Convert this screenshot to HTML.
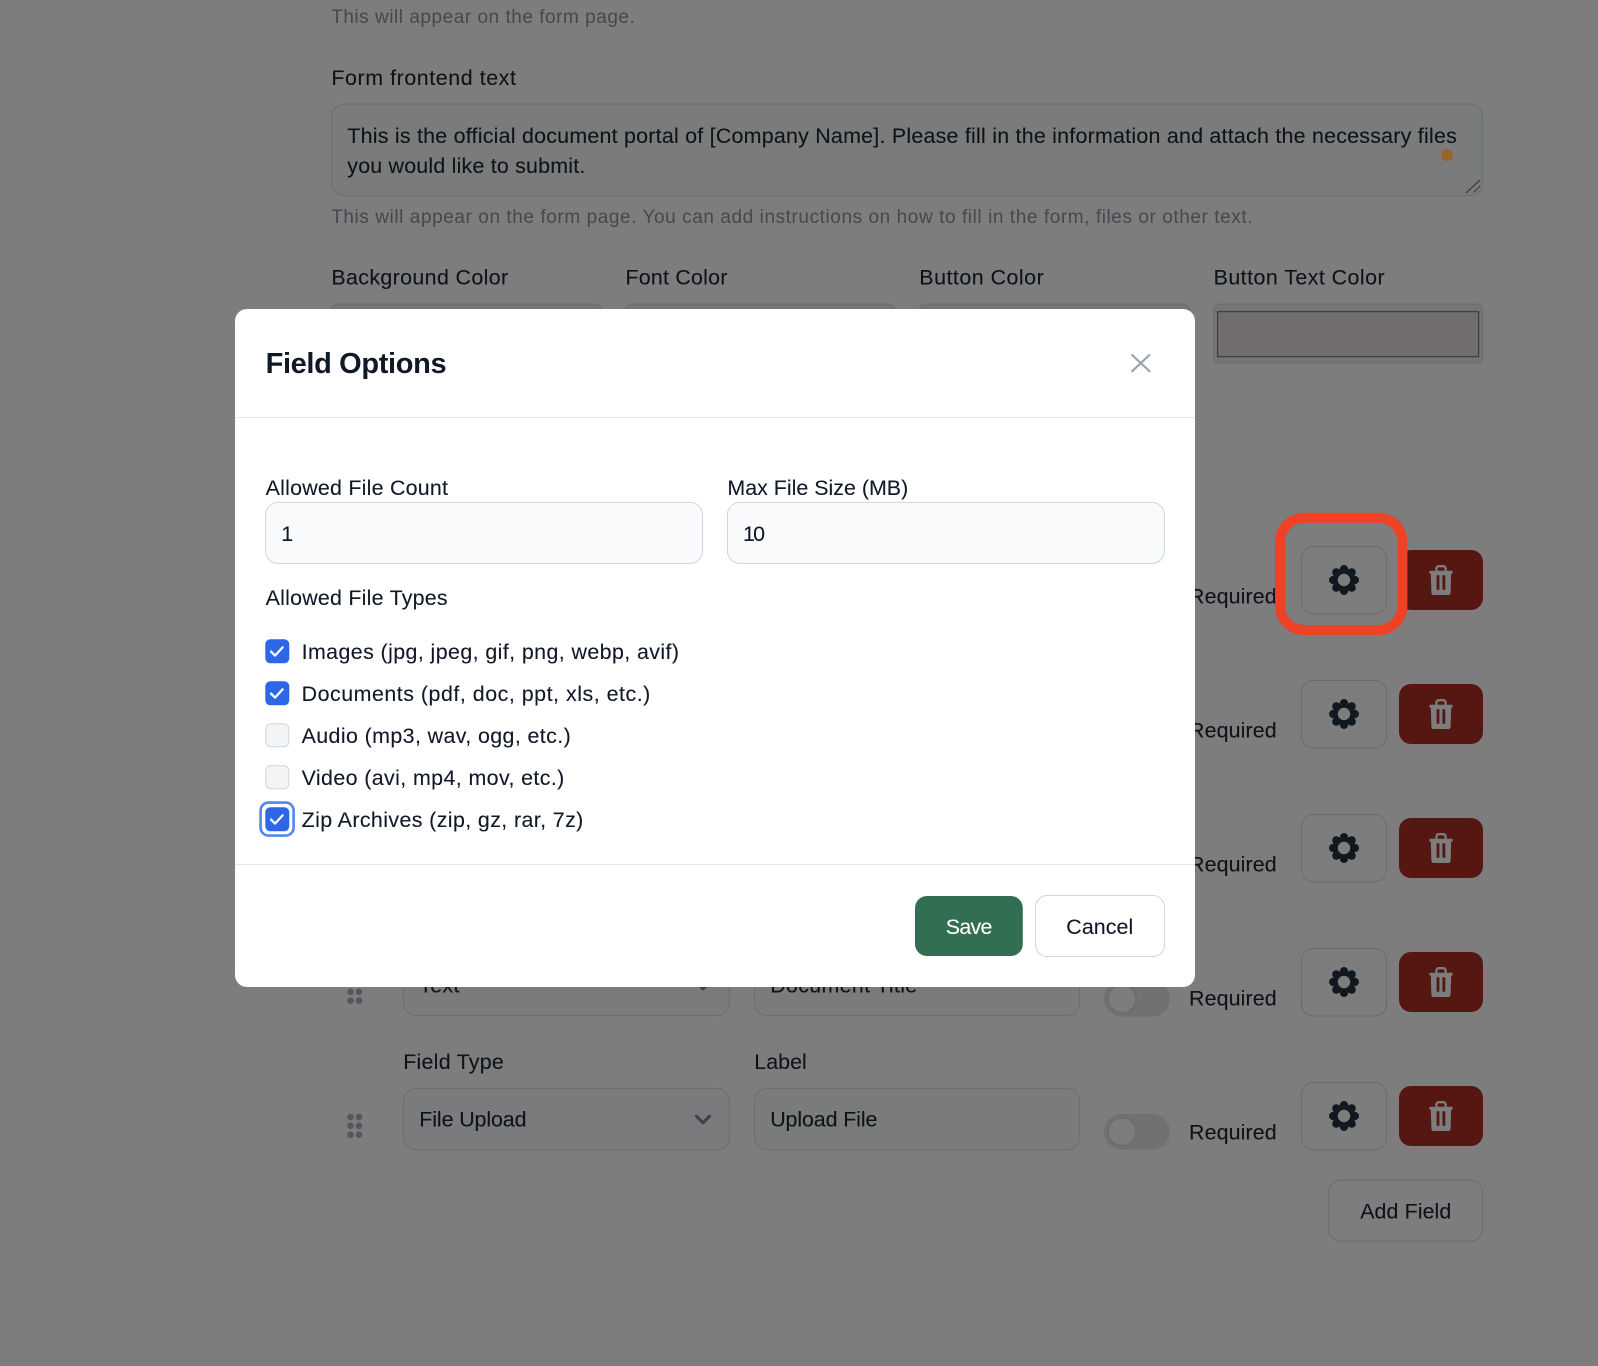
<!DOCTYPE html>
<html lang="en">
<head>
<meta charset="utf-8">
<title>Field Options</title>
<style>
html,body{margin:0;padding:0;background:#7d7d7d;width:1598px;height:1366px;overflow:hidden}
svg{display:block}
text{font-family:"Liberation Sans",Arial,sans-serif;font-size:21.4px;fill:#0f1219;stroke:#0f1219;stroke-width:.1px}
.h{font-size:19px;fill:#45484d;stroke:none}
.m{fill:#111827;stroke:#111827}
.t{font-size:29px;font-weight:700;stroke:none}
.in{fill:#7a7c7b;stroke:#6b6d6e;stroke-width:1}
.sel{fill:#7a7b7c;stroke:#6b6c6f;stroke-width:1}
.btn{fill:#7d7d7d;stroke:#6c6c6c;stroke-width:1}
.ck{fill:none;stroke:#fff;stroke-width:2.3;stroke-linecap:round;stroke-linejoin:round}
</style>
</head>
<body>
<svg width="1598" height="1366" viewBox="0 0 1598 1366" xmlns="http://www.w3.org/2000/svg">
<defs>
<g id="gear" fill="#111820">
<circle r="11.5"/>
<circle cx="10.9" r="4.1"/><circle cx="-10.9" r="4.1"/><circle cy="10.9" r="4.1"/><circle cy="-10.9" r="4.1"/>
<circle cx="7.7" cy="7.7" r="4.1"/><circle cx="-7.7" cy="7.7" r="4.1"/><circle cx="7.7" cy="-7.7" r="4.1"/><circle cx="-7.7" cy="-7.7" r="4.1"/>
<circle r="6.2" fill="#7d7d7d"/>
</g>
<g id="trash">
<path d="M-4.6-8V-11.5A2.3 2.3 0 0 1-2.3-13.8H2.3A2.3 2.3 0 0 1 4.6-11.5V-8" fill="none" stroke="#7d7d7d" stroke-width="2.3"/>
<rect x="-11.7" y="-9.3" width="23.4" height="3" rx="1.2" fill="#7d7d7d"/>
<path d="M-10.2-7H10.2L9.6 12.8A2.2 2.2 0 0 1 7.4 15H-7.4A2.2 2.2 0 0 1-9.6 12.8Z" fill="#7d7d7d"/>
<rect x="-4.4" y="-4.8" width="2.8" height="14.6" rx=".6" fill="#561713"/>
<rect x="1.4" y="-4.8" width="2.9" height="14.6" rx=".6" fill="#561713"/>
</g>
<g id="chev"><path d="M-6.6-3.8 0 2.8 6.6-3.8" fill="none" stroke="#3f4147" stroke-width="3" stroke-linecap="round" stroke-linejoin="round"/></g>
<g id="dots" fill="#53565c">
<circle cx="350.5" cy="0" r="3.3"/><circle cx="359" cy="0" r="3.3"/>
<circle cx="350.5" cy="8.8" r="3.3"/><circle cx="359" cy="8.8" r="3.3"/>
<circle cx="350.5" cy="17.7" r="3.3"/><circle cx="359" cy="17.7" r="3.3"/>
</g>
</defs>

<rect width="1598" height="1366" fill="#7d7d7d"/>

<!-- page behind the dialog -->
<text class="h" x="331.2" y="23" textLength="303.6">This will appear on the form page.</text>
<text x="331.4" y="85" textLength="184.5">Form frontend text</text>

<rect class="in" x="331.6" y="104" width="1151" height="91.7" rx="12.5"/>
<text x="347.3" y="143" textLength="1109.5">This is the official document portal of [Company Name]. Please fill in the information and attach the necessary files</text>
<text x="347.3" y="173" textLength="238">you would like to submit.</text>
<circle cx="1447" cy="155" r="6" fill="#98642a"/>
<path d="M1466 193 1480 180M1473.5 192.5 1480 186" stroke="#3c3c3c" stroke-width="1.2" fill="none"/>
<text class="h" x="331.2" y="223" textLength="921.3">This will appear on the form page. You can add instructions on how to fill in the form, files or other text.</text>

<text x="331.4" y="284.4" textLength="176.7">Background Color</text>
<text x="625.4" y="284.4" textLength="102">Font Color</text>
<text x="919.3" y="284.4" textLength="124.4">Button Color</text>
<text x="1213.6" y="284.4" textLength="171">Button Text Color</text>

<rect x="331.6" y="304" width="269.4" height="59.3" rx="6" fill="#757575" stroke="#6c6c6c"/>
<rect x="625.4" y="304" width="269.4" height="59.3" rx="6" fill="#757575" stroke="#6c6c6c"/>
<rect x="919.4" y="304" width="269.8" height="59.3" rx="6" fill="#757575" stroke="#6c6c6c"/>
<rect x="1213.8" y="304" width="268.8" height="59.3" rx="6" fill="#757575" stroke="#6c6c6c"/>
<rect x="1217.6" y="311.6" width="261" height="45" fill="#726e6d" stroke="#3f3f3f" stroke-width="1.3"/>

<!-- rows -->
<text x="1189" y="603.6" textLength="87.7">Required</text>
<text x="1189" y="737.4" textLength="87.7">Required</text>
<text x="1189" y="871.4" textLength="87.7">Required</text>
<text x="1189" y="1005.4" textLength="87.7">Required</text>
<text x="1189" y="1139.4" textLength="87.7">Required</text>

<rect class="btn" x="1301.5" y="546.5" width="85" height="67.5" rx="12"/>
<rect class="btn" x="1301.5" y="680.5" width="85" height="67.5" rx="12"/>
<rect class="btn" x="1301.5" y="814.5" width="85" height="67.5" rx="12"/>
<rect class="btn" x="1301.5" y="948.5" width="85" height="67.5" rx="12"/>
<rect class="btn" x="1301.5" y="1082.5" width="85" height="67.5" rx="12"/>
<use href="#gear" x="1344" y="580"/>
<use href="#gear" x="1344" y="714"/>
<use href="#gear" x="1344" y="848"/>
<use href="#gear" x="1344" y="982"/>
<use href="#gear" x="1344" y="1116"/>

<rect x="1399" y="550" width="84" height="60" rx="12" fill="#561713"/>
<rect x="1399" y="684" width="84" height="60" rx="12" fill="#561713"/>
<rect x="1399" y="818" width="84" height="60" rx="12" fill="#561713"/>
<rect x="1399" y="952" width="84" height="60" rx="12" fill="#561713"/>
<rect x="1399" y="1086" width="84" height="60" rx="12" fill="#561713"/>
<use href="#trash" x="1441" y="580"/>
<use href="#trash" x="1441" y="714"/>
<use href="#trash" x="1441" y="848"/>
<use href="#trash" x="1441" y="982"/>
<use href="#trash" x="1441" y="1116"/>

<!-- row 4 -->
<use href="#dots" x="0" y="983"/>
<rect class="sel" x="403.4" y="954" width="326" height="61.6" rx="12.5"/>
<text x="419.3" y="992.7" textLength="40">Text</text>
<use href="#chev" x="703" y="986"/>
<rect class="in" x="754.4" y="954" width="325" height="61.6" rx="12.5"/>
<text x="770.2" y="992.7" textLength="147">Document Title</text>
<rect x="1104" y="981" width="66" height="35.6" rx="17.8" fill="#717173"/>
<circle cx="1122" cy="998.8" r="14" fill="#7d7d7d" stroke="#6c6c6e" stroke-width="1.5"/>

<!-- row 5 -->
<text x="403.2" y="1068.8" textLength="100.6">Field Type</text>
<text x="754.3" y="1068.8" textLength="52.5">Label</text>
<use href="#dots" x="0" y="1117"/>
<rect class="sel" x="403.4" y="1088.4" width="326" height="61.4" rx="12.5"/>
<text x="419.3" y="1126.7" textLength="107.2">File Upload</text>
<use href="#chev" x="703" y="1120"/>
<rect class="in" x="754.4" y="1088.4" width="325" height="61.4" rx="12.5"/>
<text x="770.2" y="1126.7" textLength="107.2">Upload File</text>
<rect x="1104" y="1114" width="66" height="35.6" rx="17.8" fill="#717173"/>
<circle cx="1122" cy="1131.8" r="14" fill="#7d7d7d" stroke="#6c6c6e" stroke-width="1.5"/>

<rect class="btn" x="1328.6" y="1180.3" width="153.9" height="61" rx="12"/>
<text x="1360.2" y="1218.7" textLength="91.1">Add Field</text>

<!-- dialog -->
<rect x="235" y="309" width="960" height="678" rx="12" fill="#fff"/>
<text class="m t" x="265.6" y="373" textLength="181">Field Options</text>
<path d="M1132.2 355 1149.4 371.2M1149.4 355 1132.2 371.2" stroke="#9ca3af" stroke-width="2.2" fill="none" stroke-linecap="round"/>
<rect x="235" y="417" width="960" height="1" fill="#e5e7eb"/>

<text class="m" x="265.6" y="495" textLength="182.4">Allowed File Count</text>
<text class="m" x="727.4" y="495" textLength="180.8">Max File Size (MB)</text>
<rect x="265.6" y="502.4" width="437" height="61" rx="12.5" fill="#f9fafb" stroke="#d1d5db" stroke-width="1"/>
<rect x="727.4" y="502.4" width="437" height="61" rx="12.5" fill="#f9fafb" stroke="#d1d5db" stroke-width="1"/>
<text class="m" x="281.2" y="541" textLength="8">1</text>
<text class="m" x="743" y="541" textLength="22">10</text>

<text class="m" x="265.6" y="605" textLength="182">Allowed File Types</text>

<rect x="265.3" y="639.3" width="24" height="24" rx="5" fill="#2d67e8"/>
<path class="ck" d="M271 651.6 275 655.6 282.6 647.4"/>
<rect x="265.3" y="681.3" width="24" height="24" rx="5" fill="#2d67e8"/>
<path class="ck" d="M271 693.6 275 697.6 282.6 689.4"/>
<rect x="265.8" y="723.8" width="23" height="23" rx="5" fill="#f3f4f6" stroke="#d1d5db"/>
<rect x="265.8" y="765.8" width="23" height="23" rx="5" fill="#f3f4f6" stroke="#d1d5db"/>
<rect x="260.6" y="802.6" width="33" height="33" rx="8" fill="#fff" stroke="#4f86f0" stroke-width="2.6"/>
<rect x="265.3" y="807.3" width="24" height="24" rx="5" fill="#2d67e8"/>
<path class="ck" d="M271 819.6 275 823.6 282.6 815.4"/>

<text class="m" x="301.6" y="659" textLength="377.4">Images (jpg, jpeg, gif, png, webp, avif)</text>
<text class="m" x="301.6" y="701" textLength="348.7">Documents (pdf, doc, ppt, xls, etc.)</text>
<text class="m" x="301.6" y="743" textLength="269.1">Audio (mp3, wav, ogg, etc.)</text>
<text class="m" x="301.6" y="785" textLength="262.7">Video (avi, mp4, mov, etc.)</text>
<text class="m" x="301.6" y="827" textLength="281.7">Zip Archives (zip, gz, rar, 7z)</text>

<rect x="235" y="864" width="960" height="1" fill="#e5e7eb"/>
<rect x="915" y="896" width="107.8" height="60" rx="12" fill="#316e52"/>
<text x="945.8" y="934" textLength="46.6" style="fill:#fff;stroke:#fff">Save</text>
<rect x="1035.6" y="895.4" width="129" height="61.2" rx="12" fill="#fff" stroke="#d1d5db" stroke-width="1"/>
<text class="m" x="1066.3" y="934" textLength="67">Cancel</text>

<!-- annotation -->
<rect x="1280" y="517.8" width="122.4" height="112.2" rx="24" fill="none" stroke="#ee4226" stroke-width="10"/>
</svg>
</body>
</html>
